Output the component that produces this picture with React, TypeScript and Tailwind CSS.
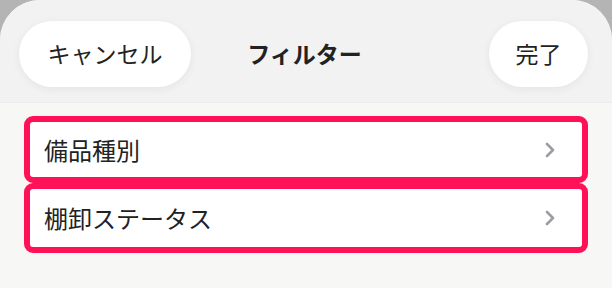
import React from 'react';

const rows = ['備品種別', '棚卸ステータス'];

function Chevron() {
  return (
    <svg width="12" height="16" viewBox="0 0 12 16" fill="none" className="shrink-0">
      <path d="M3 2 L9 8 L3 14" stroke="#9c9ca4" strokeWidth="2.6" strokeLinecap="round" strokeLinejoin="round" />
    </svg>
  );
}

export default function App() {
  return (
    <div className="w-[612px] h-[288px] bg-[#b4b4b4] overflow-hidden font-['Noto_Sans_CJK_JP',sans-serif] text-[#222]">
      <div className="h-full rounded-t-[40px] bg-[#f7f7f5] overflow-hidden">
        {/* header */}
        <header className="h-[103px] bg-[#f2f2f2] grid grid-cols-[1fr_auto_1fr] items-center pl-[19px] pr-[24px] pt-[5px] border-b border-[#ececec]">
          <div className="flex justify-start">
            <button className="h-[66px] w-[172px] rounded-full bg-white shadow-[0_2px_10px_rgba(0,0,0,0.06)] text-[23px] leading-none">
              キャンセル
            </button>
          </div>
          <h1 className="text-[23px] font-bold leading-none pl-[2px]">フィルター</h1>
          <div className="flex justify-end">
            <button className="h-[66px] w-[99px] rounded-full bg-white shadow-[0_2px_10px_rgba(0,0,0,0.06)] text-[23px] leading-none">
              完了
            </button>
          </div>
        </header>

        {/* filter rows */}
        <div className="px-[24px] pt-[13px] flex flex-col">
          {rows.map((label, i) => (
            <div
              key={label}
              className={`${i === 0 ? 'h-[67px]' : 'h-[70px]'} border-[6px] border-[#ff1158] rounded-[9px] bg-white flex items-center justify-between pl-[14px] pr-[26px]`}
            >
              <span className="text-[24px] leading-none">{label}</span>
              <Chevron />
            </div>
          ))}
        </div>
      </div>
    </div>
  );
}
